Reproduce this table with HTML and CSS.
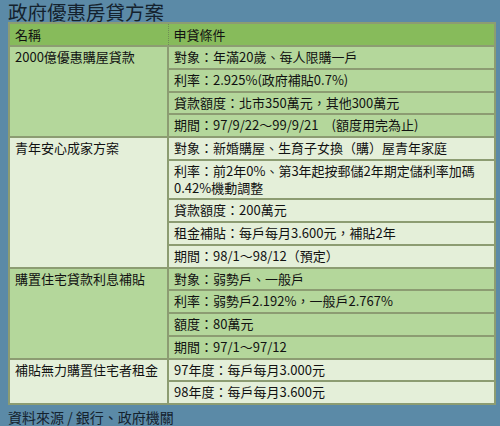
FILE: index.html
```html
<!DOCTYPE html>
<html lang="zh-Hant">
<head>
<meta charset="utf-8">
<title>政府優惠房貸方案</title>
<link rel="stylesheet" href="styles.css">
</head>
<body>
<div class="page">
  <h1 class="title">政府優惠房貸方案</h1>
  <table class="loan">
    <thead>
      <tr><th class="name">名稱</th><th class="cond">申貸條件</th></tr>
    </thead>
    <tbody class="g-a">
      <tr><td class="name" rowspan="4">2000億優惠購屋貸款</td><td>對象：年滿20歲、每人限購一戶</td></tr>
      <tr><td>利率：2.925%(政府補貼0.7%)</td></tr>
      <tr><td>貸款額度：北市350萬元，其他300萬元</td></tr>
      <tr><td>期間：97/9/22～99/9/21　(額度用完為止)</td></tr>
    </tbody>
    <tbody class="g-b">
      <tr><td class="name" rowspan="5">青年安心成家方案</td><td>對象：新婚購屋、生育子女換（購）屋青年家庭</td></tr>
      <tr><td class="two">利率：前2年0%、第3年起按郵儲2年期定儲利率加碼<br>0.42%機動調整</td></tr>
      <tr><td>貸款額度：200萬元</td></tr>
      <tr><td>租金補貼：每戶每月3.600元，補貼2年</td></tr>
      <tr><td>期間：98/1～98/12（預定）</td></tr>
    </tbody>
    <tbody class="g-a">
      <tr><td class="name" rowspan="4">購置住宅貸款利息補貼</td><td>對象：弱勢戶、一般戶</td></tr>
      <tr><td>利率：弱勢戶2.192%，一般戶2.767%</td></tr>
      <tr><td>額度：80萬元</td></tr>
      <tr><td>期間：97/1～97/12</td></tr>
    </tbody>
    <tbody class="g-b">
      <tr><td class="name" rowspan="2">補貼無力購置住宅者租金</td><td>97年度：每戶每月3.000元</td></tr>
      <tr><td>98年度：每戶每月3.600元</td></tr>
    </tbody>
  </table>
  <p class="source">資料來源 / 銀行、政府機關</p>
</div>
</body>
</html>
```

FILE: styles.css
```css
html, body {
  margin: 0;
  padding: 0;
  background: #5b8aa7;
}
.page {
  width: 500px;
  height: 426px;
  padding: 0 4px 0 8px;
  box-sizing: border-box;
  font-family: "Noto Sans CJK TC", "Noto Sans", sans-serif;
  color: #111;
}
.title {
  margin: 0;
  padding-top: 1px;
  height: 21px;
  font-size: 19.5px;
  font-weight: normal;
  line-height: 21px;
  color: #14222e;
}
.loan {
  width: 488px;
  border-collapse: collapse;
  border: 2px solid #8c9c72;
  font-size: 13px;
}
.loan th,
.loan td {
  padding: 2px 0 2px 5px;
  line-height: 16.75px;
  text-align: left;
  vertical-align: top;
  font-weight: normal;
  border: 2px solid #8c9c72;
  white-space: nowrap;
}
.loan th {
  background: #87bb5b;
  border: 1px dotted #6f8d56;
  border-bottom: 2px dotted #6f8d56;
  padding: 2px 0 2px 5px;
  line-height: 17px;
}
.loan .two {
  line-height: 17.5px;
  padding: 1px 0 1.5px 5px;
}
.loan .name {
  width: 152px;
}
.g-a td {
  background: #b4d79b;
}
.g-b td {
  background: #e4efd9;
}
.source {
  margin: 3px 0 0;
  font-size: 14px;
  line-height: 18px;
  color: #14222e;
}
```
